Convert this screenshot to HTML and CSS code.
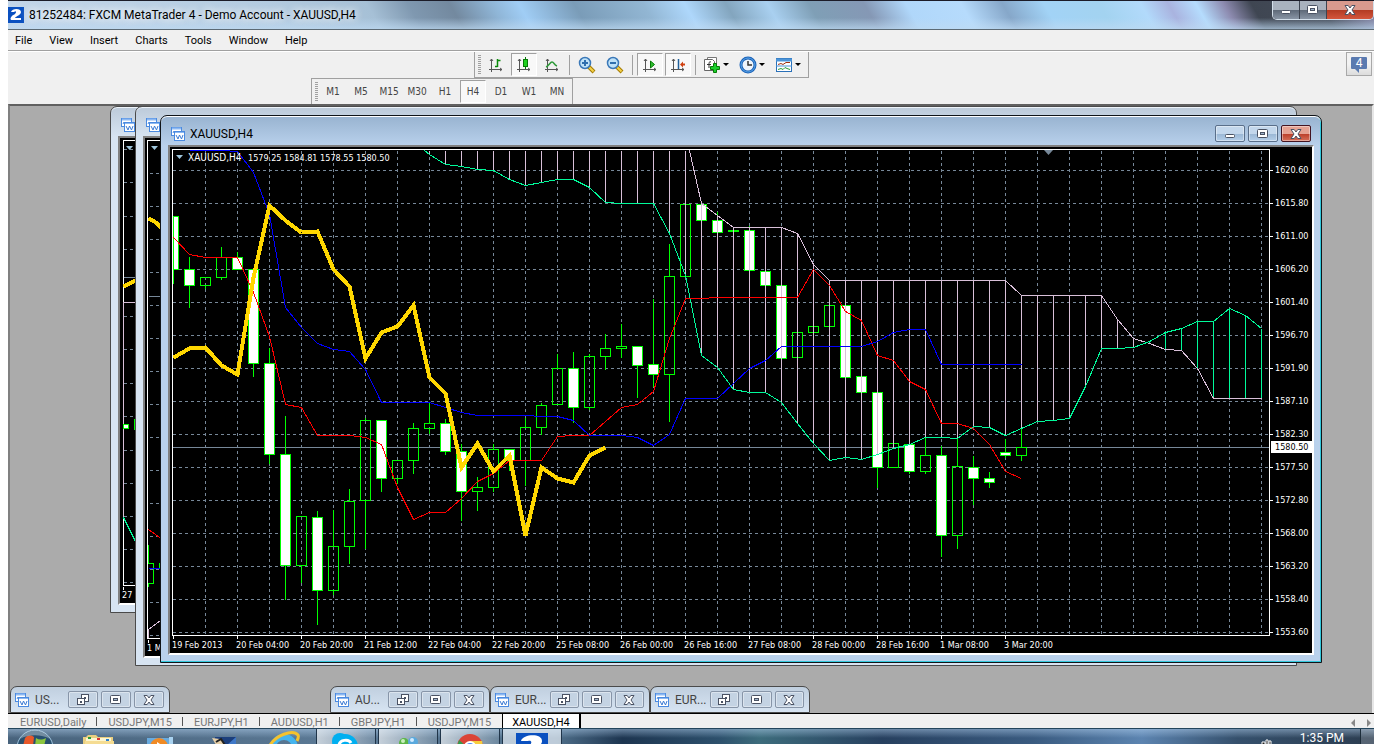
FILE: index.html
```html
<!DOCTYPE html>
<html lang="en">
<head>
  <meta charset="UTF-8">
  <title>81252484: FXCM MetaTrader 4 - Demo Account - XAUUSD,H4</title>
  <link rel="stylesheet" href="styles.css">
</head>
<body>
  <!-- shared icons -->
  <svg width="0" height="0" class="defs">
    <symbol id="i-chart" viewBox="0 0 14 14">
      <rect x="0.5" y="0.5" width="10" height="8" fill="#fff" stroke="#4a8ae0"/>
      <path d="M1 1.5h9" stroke="#8db9f2" stroke-width="2"/>
      <path d="M2 6l1-2 1 2 1-2" fill="none" stroke="#4a8ae0"/>
      <rect x="3.500" y="4.500" width="10" height="9" fill="#fff" stroke="#4a8ae0"/>
      <path d="M4 5.500h9" stroke="#8db9f2"/>
      <path d="M5 8l2 4 1.500-4 2 4 1.500-4" fill="none" stroke="#3c7bd4"/>
    </symbol>
    <symbol id="i-min" viewBox="0 0 14 12">
      <rect x="2.500" y="6.500" width="9" height="3" rx="1" fill="#fff" stroke="#4a5263"/>
    </symbol>
    <symbol id="i-max" viewBox="0 0 14 12">
      <rect x="1.500" y="1.500" width="10" height="8" rx="1" fill="#fff" stroke="#4a5263"/>
      <rect x="4.500" y="4.500" width="4" height="2" fill="#9fb4cc" stroke="#4a5263"/>
    </symbol>
    <symbol id="i-restore" viewBox="0 0 14 12">
      <rect x="5.500" y="0.500" width="7" height="7" fill="#fff" stroke="#4a5263"/>
      <rect x="8.500" y="3.500" width="1" height="1" fill="#fff" stroke="#4a5263"/>
      <rect x="1.500" y="4.500" width="7" height="6" fill="#fff" stroke="#4a5263"/>
      <rect x="4.500" y="7.500" width="1" height="1" fill="#fff" stroke="#4a5263"/>
    </symbol>
    <symbol id="i-close" viewBox="0 0 14 12">
      <path d="M2 1.500h3.200L7 4l1.800-2.500H12L9 6l3 4.500H8.800L7 8l-1.800 2.500H2L5 6z" fill="#fff" stroke="#4a5263"/>
    </symbol>
    <symbol id="i-axes" viewBox="0 0 16 16">
      <path d="M3.500 2v13M1 12.500h13M2 4l1.500-2L5 4M12 11l2 1.500-2 1.500" fill="none" stroke="#555"/>
    </symbol>
  </svg>

  <div class="app">
    <header class="titlebar">
      <svg class="logo" width="16" height="16" viewBox="0 0 16 16">
        <rect width="16" height="16" fill="#0a50c0"/>
        <path d="M3 5C4 1 13 1 13 5c0 3-5 4-6 6h6v2H4c-2 0-2-2 0-4 1-1 4-2 4-4 0-1-1-1-2 0z" fill="#fff"/>
      </svg>
      <h1>81252484: FXCM MetaTrader 4 - Demo Account - XAUUSD,H4</h1>
      <div class="caption">
        <button aria-label="Minimize"><svg width="14" height="12"><use href="#i-min"/></svg></button>
        <button aria-label="Restore"><svg width="14" height="12"><use href="#i-max"/></svg></button>
        <button class="close" aria-label="Close"><svg width="14" height="12"><use href="#i-close"/></svg></button>
      </div>
    </header>

    <nav class="menu">
      <button>File</button>
      <button>View</button>
      <button>Insert</button>
      <button>Charts</button>
      <button>Tools</button>
      <button>Window</button>
      <button>Help</button>
    </nav>

    <div class="toolbars">
      <div class="toolbar charts-bar">
        <span class="grip"></span>
        <button class="tool" aria-label="Bar chart">
          <svg width="16" height="16"><use href="#i-axes"/><path d="M9.500 2v8M9.500 3.500h3M7 9.500h2.500" fill="none" stroke="#0a8a0a" stroke-width="1.500"/></svg>
        </button>
        <button class="tool on" aria-label="Candlesticks">
          <svg width="16" height="16"><use href="#i-axes"/><path d="M9.500 0v12" stroke="#067a06"/><rect x="7.500" y="2.500" width="4" height="7" fill="#1fd01f" stroke="#067a06"/></svg>
        </button>
        <button class="tool" aria-label="Line chart">
          <svg width="16" height="16"><use href="#i-axes"/><path d="M2 10c3-1 4-5 6-5s2 3 5 4" fill="none" stroke="#2f9a3a" stroke-width="1.500"/></svg>
        </button>
        <span class="sep"></span>
        <button class="tool" aria-label="Zoom in">
          <svg width="18" height="18"><path d="M10.500 10.500l5.500 5.500" stroke="#a67c00" stroke-width="4"/><path d="M10.500 10.500l5 5" stroke="#f5d24a" stroke-width="2"/><circle cx="7" cy="7" r="5.500" fill="#bfe2f8" stroke="#3a78b8" stroke-width="1.500"/><path d="M4 7h6M7 4v6" stroke="#2f6fae" stroke-width="2"/></svg>
        </button>
        <button class="tool" aria-label="Zoom out">
          <svg width="18" height="18"><path d="M10.500 10.500l5.500 5.500" stroke="#a67c00" stroke-width="4"/><path d="M10.500 10.500l5 5" stroke="#f5d24a" stroke-width="2"/><circle cx="7" cy="7" r="5.500" fill="#bfe2f8" stroke="#3a78b8" stroke-width="1.500"/><path d="M4 7h6" stroke="#2f6fae" stroke-width="2"/></svg>
        </button>
        <span class="sep"></span>
        <button class="tool on" aria-label="Auto scroll">
          <svg width="16" height="16"><use href="#i-axes"/><path d="M8.500 4v7l4-3.500z" fill="#2fc02f" stroke="#067a06"/></svg>
        </button>
        <button class="tool on" aria-label="Chart shift">
          <svg width="16" height="16"><use href="#i-axes"/><path d="M8.500 2v10" stroke="#1f5f9a" stroke-width="1.500"/><path d="M10 7.500l3-3v2h2v2h-2v2z" fill="#d04010"/></svg>
        </button>
        <span class="sep"></span>
        <button class="tool drop" aria-label="Indicators">
          <svg width="18" height="18"><path d="M4.500 1.500h9v10h-9z" fill="#fff" stroke="#777"/><path d="M1.500 3.500h8l2 2v9h-10z" fill="#fff" stroke="#666"/><path d="M8 6c-2-1-2 1-2 2v4M4 8.500h4" fill="none" stroke="#333"/><path d="M10.500 7.500h3v3h3v3h-3v3h-3v-3h-3v-3h3z" fill="#19cf2b" stroke="#067a06"/></svg>
        </button>
        <button class="tool drop" aria-label="Periods">
          <svg width="18" height="18"><circle cx="9" cy="9" r="7" fill="#eef4fb" stroke="#1b62b8" stroke-width="3"/><circle cx="9" cy="9" r="7" fill="none" stroke="#5aa5e8"/><path d="M9 5v4h4" fill="none" stroke="#333" stroke-width="1.500"/></svg>
        </button>
        <button class="tool drop" aria-label="Templates">
          <svg width="18" height="16"><rect x="1.500" y="1.500" width="15" height="13" fill="#fff" stroke="#2a70b8"/><path d="M1 3h16" stroke="#4b94d8" stroke-width="3"/><path d="M1 9h16" stroke="#4b94d8"/><path d="M3 7.500l3-1 2 1 3-2 4 0" fill="none" stroke="#a03010"/><path d="M3 12.500l3-1 2 1 2-2 2 1 3 1" fill="none" stroke="#2b9a3a"/></svg>
        </button>
      </div>
      <button class="messages" aria-label="4 messages">
        <span>4</span>
      </button>
      <div class="toolbar periods-bar">
        <span class="grip"></span>
        <button class="tool">M1</button>
        <button class="tool">M5</button>
        <button class="tool">M15</button>
        <button class="tool">M30</button>
        <button class="tool">H1</button>
        <button class="tool on">H4</button>
        <button class="tool">D1</button>
        <button class="tool">W1</button>
        <button class="tool">MN</button>
      </div>
    </div>

    <main class="workspace">
      <section class="window back-first">
        <div class="window-title"><svg width="14" height="14"><use href="#i-chart"/></svg></div>
        <div class="window-body">
          <svg width="1142" height="465" viewBox="120 138 1142 465">
            <g transform="translate(.5 .5)" shape-rendering="crispEdges" fill="none">
              <path class="grid" d="M123 149h12M123 182h12M123 216h12M123 249h12M123 316h12M123 349h12M123 383h12M123 416h12M123 450h12M123 483h12M123 516h12M123 549h12M123 582h12"/>
              <path class="price-line" d="M123 277h12"/>
              <path class="frame" d="M135 140h-12v445h12M123 586v3"/>
              <path class="span-b" d="M135 302h-12v214"/>
              <path class="span-a" d="M123 517l12 24"/>
              <path class="candle bear" d="M123 424h5v4h-5z"/>
              <path class="candle" d="M134 418v11"/>
              <path class="chikou" d="M123 286l14-7"/>
            </g>
            <path d="M126 146h7l-3.500 4z" fill="#9fc6dc"/>
            <text x="122" y="598">27</text>
          </svg>
        </div>
      </section>

      <section class="window back-second">
        <div class="window-title"><svg width="14" height="14"><use href="#i-chart"/></svg></div>
        <div class="window-body">
          <svg width="1142" height="518" viewBox="145 138 1142 518">
            <g transform="translate(.5 .5)" shape-rendering="crispEdges" fill="none">
              <path class="grid" d="M149 173h12M149 206h12M149 239h12M149 272h12M149 305h12M149 338h12M149 371h12M149 404h12M149 437h12M149 470h12M149 503h12M149 536h12M149 569h12M149 602h12M149 635h12"/>
              <path class="price-line" d="M148 296h14"/>
              <path class="frame" d="M162 140h-15v498h15M148 639v3"/>
              <path class="tenkan" d="M148 529l14 10"/>
              <path class="candle" d="M148 544v19h5v20h-5v3M159 562v5"/>
              <path class="kijun" d="M148 568h14"/>
              <path class="span-b" d="M148 637v-8l12-9"/>
              <path class="chikou" d="M148 218l6 3 8 7"/>
            </g>
            <path d="M151 146h7l-3.500 4z" fill="#9fc6dc"/>
            <text x="147" y="651">1 M</text>
          </svg>
        </div>
      </section>

      <section class="window active">
        <div class="window-title">
          <svg width="14" height="14"><use href="#i-chart"/></svg>
          <h2>XAUUSD,H4</h2>
          <div class="window-buttons">
            <button aria-label="Minimize"><svg width="14" height="12"><use href="#i-min"/></svg></button>
            <button aria-label="Maximize"><svg width="14" height="12"><use href="#i-max"/></svg></button>
            <button class="close" aria-label="Close"><svg width="14" height="12"><use href="#i-close"/></svg></button>
          </div>
        </div>
        <div class="window-body">
          <svg id="chart" width="1142" height="506" viewBox="170 147 1142 506"></svg>
        </div>
      </section>

      <div class="minimized">
        <div class="mini">
          <svg width="14" height="14"><use href="#i-chart"/></svg><span>US...</span>
          <button aria-label="Restore"><svg width="14" height="12"><use href="#i-restore"/></svg></button>
          <button aria-label="Maximize"><svg width="14" height="12"><use href="#i-max"/></svg></button>
          <button aria-label="Close"><svg width="14" height="12"><use href="#i-close"/></svg></button>
        </div>
        <div class="mini-space"></div>
        <div class="mini">
          <svg width="14" height="14"><use href="#i-chart"/></svg><span>AU...</span>
          <button aria-label="Restore"><svg width="14" height="12"><use href="#i-restore"/></svg></button>
          <button aria-label="Maximize"><svg width="14" height="12"><use href="#i-max"/></svg></button>
          <button aria-label="Close"><svg width="14" height="12"><use href="#i-close"/></svg></button>
        </div>
        <div class="mini">
          <svg width="14" height="14"><use href="#i-chart"/></svg><span>EUR...</span>
          <button aria-label="Restore"><svg width="14" height="12"><use href="#i-restore"/></svg></button>
          <button aria-label="Maximize"><svg width="14" height="12"><use href="#i-max"/></svg></button>
          <button aria-label="Close"><svg width="14" height="12"><use href="#i-close"/></svg></button>
        </div>
        <div class="mini">
          <svg width="14" height="14"><use href="#i-chart"/></svg><span>EUR...</span>
          <button aria-label="Restore"><svg width="14" height="12"><use href="#i-restore"/></svg></button>
          <button aria-label="Maximize"><svg width="14" height="12"><use href="#i-max"/></svg></button>
          <button aria-label="Close"><svg width="14" height="12"><use href="#i-close"/></svg></button>
        </div>
      </div>
    </main>

    <nav class="tabs">
      <button>EURUSD,Daily</button>
      <button>USDJPY,M15</button>
      <button>EURJPY,H1</button>
      <button>AUDUSD,H1</button>
      <button>GBPJPY,H1</button>
      <button>USDJPY,M15</button>
      <button class="current">XAUUSD,H4</button>
      <svg class="tab-arrows" width="26" height="12"><path d="M7 2v8L3 6zM19 2v8l4-4z" fill="#888"/></svg>
    </nav>

    <footer class="taskbar">
      <button class="pin" aria-label="Start">
        <svg width="40" height="16" viewBox="0 0 40 16"><circle cx="19" cy="19" r="18" fill="#28506f" stroke="#9fc3dd"/><path d="M9 9c3-3 6-3 9-1l-1 9H7z" fill="#e8582a"/><path d="M20 9c3 2 6 2 10 0l-2 8h-9z" fill="#8cc63e"/><path d="M4 10a17 17 0 0 1 30 0C26 5 12 5 4 10z" fill="#fff" opacity=".35"/></svg>
      </button>
      <button class="pin" aria-label="Windows Explorer">
        <svg width="40" height="16" viewBox="0 0 40 16"><path d="M4 16V8h3l2-2h8l2 2h15v8z" fill="#e9cf80"/><path d="M7 9h25v3H7z" fill="#fdf6d2"/><path d="M6 12h29v4H6z" fill="#f5dc92"/><path d="M9 8h3v2H9z" fill="#2a9d3a"/><path d="M18 9h3v2h-3z" fill="#d33"/><path d="M27 10h3v2h-3z" fill="#2b7fd0"/></svg>
      </button>
      <button class="pin" aria-label="Media Player">
        <svg width="40" height="16" viewBox="0 0 40 16"><path d="M6 9h25v7H6z" fill="#68abe0"/><path d="M28 8h4v8h-4z" fill="#a8d2f0"/><circle cx="18" cy="18" r="9" fill="#f08a24"/><path d="M16 13l6 4h-6z" fill="#fff"/></svg>
      </button>
      <button class="pin" aria-label="Trader">
        <svg width="40" height="16" viewBox="0 0 40 16"><path d="M12 8h21v8H12z" fill="#1c3f7c"/><path d="M24 16l9-8v8z" fill="#3f78c8"/><path d="M9 9l8 1 6 6H13z" fill="#e6cfa8"/><path d="M13 13l5-3 4 6" fill="none" stroke="#222" stroke-width="2"/></svg>
      </button>
      <button class="pin" aria-label="Internet Explorer">
        <svg width="40" height="16" viewBox="0 0 40 16"><circle cx="19" cy="19" r="11" fill="none" stroke="#45b4ee" stroke-width="6"/><path d="M4 18C10 6 28 0 33 6c1 2 0 4-1 6" fill="none" stroke="#f5c22e" stroke-width="3"/></svg>
      </button>
      <button class="task" aria-label="Skype">
        <svg width="34" height="16" viewBox="0 0 34 16"><circle cx="11" cy="12" r="8" fill="#00aff0"/><circle cx="16" cy="18" r="13" fill="#00aff0"/><path d="M10 17c0-7 10-7 12-3" fill="none" stroke="#fff" stroke-width="3"/></svg>
      </button>
      <button class="task" aria-label="Messenger">
        <svg width="34" height="16" viewBox="0 0 34 16"><circle cx="13" cy="14" r="5" fill="#5cb548"/><circle cx="22" cy="13" r="5" fill="#5aa9dd"/><circle cx="21" cy="11" r="2" fill="#cfeaff"/><circle cx="12" cy="12" r="2" fill="#c9efbd"/></svg>
      </button>
      <button class="task" aria-label="Chrome">
        <svg width="34" height="16" viewBox="0 0 34 16"><circle cx="17" cy="18" r="13" fill="#db4437"/><path d="M4 18l2-7 8 7z" fill="#2e9e4f"/><path d="M17 12h12l1 6H18z" fill="#f7cd3b"/><circle cx="17" cy="18" r="6" fill="#fff"/><circle cx="17" cy="18" r="4" fill="#4a8af4"/></svg>
      </button>
      <button class="task lit" aria-label="MetaTrader">
        <svg width="34" height="16" viewBox="0 0 34 16"><path d="M1 4h32v12H1z" fill="#0a50c0"/><path d="M6 12c2-7 21-8 21 0 0 2-1 3-2 4H15c2-2 2-5-2-4z" fill="#fff"/></svg>
      </button>
      <div class="tray">
        <svg width="14" height="16" viewBox="0 0 14 16"><path d="M2 13h3v3H2zM6 11h2v5H6zM9 12h2v4H9z" fill="#222" stroke="#fff"/></svg>
        <time>1:35 PM</time>
        <span class="show-desktop"></span>
      </div>
    </footer>
  </div>

  <script src="chart.js"></script>
</body>
</html>
```

FILE: styles.css
```css
* {
  box-sizing: border-box;
}
body {
  margin: 0;
  background: #fff;
  font-family: Roboto, "Liberation Sans", sans-serif;
  font-size: 11px;
  color: #000;
}
button {
  margin: 0;
  padding: 0;
  border: 0;
  background: none;
  font: inherit;
  color: inherit;
}
h1, h2 {
  margin: 0;
  font-size: 12px;
  font-weight: normal;
}
svg {
  display: block;
  flex: none;
}
.defs {
  position: absolute;
}
.app {
  display: flex;
  flex-direction: column;
  height: 100vh;
  margin: 0 8px;
  overflow: hidden;
  background: #f0f0f0;
}

/* title bar */
.titlebar {
  display: flex;
  flex: none;
  height: 30px;
  border-top: 1px solid #1c1c28;
  border-bottom: 1px solid #5c6a74;
  background:
    linear-gradient(transparent 60%, rgba(190, 218, 242, .7)),
    linear-gradient(60deg, #c3d6ea 0%, #bdd2e6 8%, #b3cbe0 20%, #a6c0d6 27%, #7f98b0 30%, #73899f 33%, #8fb5d6 36%, #a0cdf5 38%, #7a9cb8 42%, #92b6d3 47%, #aed7fb 50%, #83a5be 53%, #a9d0f0 56%, #7f9fb6 59%, #8598b5 63%, #b0d7fa 66%, #b6dbfc 70%, #86a7c9 73%, #a2d3f6 76%, #a3d3f0 80%, #b2dafb 83%, #a9b3df 85%, #b5dcfd 87%, #8d8bb0 89%, #3f4652 91%, #444b58 96%, #8d8bb0 100%);
}
.logo {
  margin: 6px 5px 0 0;
}
.titlebar h1 {
  line-height: 28px;
  text-shadow: 0 0 8px #fff, 0 0 8px #fff;
}
.caption {
  display: flex;
  width: 102px;
  height: 19px;
  margin-left: auto;
  border: 1px solid #d3dfea;
  border-top: 0;
  border-radius: 0 0 5px 5px;
  overflow: hidden;
}
.caption button {
  display: grid;
  place-items: center;
  width: 27px;
  border-right: 1px solid #3d4450;
  background: linear-gradient(#a9b2be 50%, #5d6877 50%, #8995a5);
}
.caption .close {
  flex: 1;
  border-right: 0;
  background: linear-gradient(#d99a8e 48%, #b23a22 50%, #d4563c);
}

/* menu */
.menu {
  display: flex;
  flex: none;
  gap: 17px;
  height: 22px;
  padding-left: 7px;
  border-bottom: 1px solid #fff;
  box-shadow: inset 0 -1px #a0a0a0;
  line-height: 20px;
}

/* toolbars */
.toolbars {
  position: relative;
  flex: none;
  height: 52px;
}
.toolbar {
  display: flex;
  align-items: center;
  width: max-content;
  height: 26px;
  border: 1px solid #a0a0a0;
  border-top: 0;
}
.charts-bar {
  margin-left: 466px;
  padding-right: 1px;
}
.periods-bar {
  margin-left: 303px;
  padding-right: 1px;
  border-top: 1px solid #a0a0a0;
  border-bottom: 0;
  font-family: "DejaVu Sans Condensed", "DejaVu Sans", sans-serif;
  font-size: 10px;
  color: #444;
}
.grip {
  width: 3px;
  height: 19px;
  margin: 0 1px 0 3px;
  background: repeating-linear-gradient(#a0a0a0 0 1px, #f0f0f0 1px 2px);
}
.tool {
  display: grid;
  place-items: center;
  width: 26px;
  height: 23px;
  margin: 0 1px;
  border: 1px solid transparent;
}
.tool.on {
  border-color: #a0a0a0 #fff #fff #a0a0a0;
  background: #f8f8f8;
}
.sep {
  width: 1px;
  height: 20px;
  margin: 0 3px;
  background: #a0a0a0;
}
.tool.drop {
  display: flex;
  justify-content: space-between;
  width: 34px;
  padding: 0 4px 0 2px;
}
.tool.drop::after {
  content: "";
  border: 3px solid transparent;
  border-top-color: #000;
  border-bottom: 0;
}
.messages {
  position: absolute;
  top: 0;
  right: 2px;
  display: grid;
  place-items: center;
  width: 26px;
  height: 24px;
  border: 1px solid #a8a8a8;
  background: linear-gradient(#f2f2f2 50%, #dcdcdc);
}
.messages span {
  position: relative;
  width: 16px;
  height: 12px;
  margin-bottom: 3px;
  border-radius: 1px;
  background: #5a7ab0;
  color: #fff;
  font-size: 12px;
  line-height: 12px;
}
.messages span::after {
  content: "";
  position: absolute;
  top: 12px;
  left: 4px;
  border: 2px solid transparent;
  border-top-color: #5a7ab0;
  border-right-color: #5a7ab0;
}

/* chart windows */
.workspace {
  position: relative;
  display: flex;
  align-items: flex-end;
  flex: 1;
  min-height: 0;
  border: 2px solid #696969;
  border-top-color: #606060;
  border-left-color: #808080;
  border-right-color: #e6e6e6;
  border-bottom: 0;
  background: #ababab;
  overflow: hidden;
}
.window {
  position: absolute;
  display: flex;
  flex-direction: column;
  width: 1162px;
  padding: 0 7px 7px;
  border: 1px solid #4a4a4a;
  border-radius: 7px 7px 0 0;
  background: linear-gradient(#bccad9, #d7e4f2 30px);
  box-shadow: inset 0 1px #eef4fa;
}
.back-first {
  top: 0;
  left: 100px;
}
.back-second {
  top: 0;
  left: 125px;
}
.window.active {
  top: 9px;
  left: 150px;
  border-color: #101418;
  background: linear-gradient(#98b3d0, #b9d1ec 30px);
  box-shadow: inset 0 1px #fff, inset -1px -1px #32c8dc;
}
.window-title {
  display: flex;
  align-items: center;
  gap: 5px;
  height: 29px;
  padding: 6px 3px 0;
}
.window-body {
  border: 2px solid #fff;
  border-top-color: #808080;
  border-left-color: #808080;
  background: #000;
}
.window-buttons {
  display: flex;
  gap: 3px;
  margin-left: auto;
}
.window-buttons button,
.mini button {
  display: grid;
  place-items: center;
  width: 30px;
  height: 17px;
  border: 1px solid #5a6f8a;
  border-radius: 2px;
  background: linear-gradient(#c3d7ec 50%, #98b5d3 50%, #b5cfea);
  box-shadow: inset 0 0 0 1px rgba(255, 255, 255, .4);
}
.window-buttons .close {
  border-color: #431421;
  background: linear-gradient(#e5a293 50%, #b93b26 50%, #d6705a);
}
.minimized {
  display: flex;
}
.mini {
  display: flex;
  align-items: center;
  gap: 3px;
  width: 160px;
  height: 27px;
  padding: 0 5px 0 4px;
  border: 1px solid #4a4a4a;
  border-radius: 7px 7px 0 0;
  background: linear-gradient(#c0cfdf, #d7e4f2);
  font-size: 12px;
  color: #444;
}
.mini span {
  flex: 1;
  padding-left: 3px;
}
.mini button {
  border-color: #8795a8;
  background: #c4d3e3;
}
.mini-space {
  width: 160px;
}

/* chart drawing */
.window-body text {
  fill: #fff;
  font-family: "DejaVu Sans Condensed", "DejaVu Sans", sans-serif;
  font-size: 9px;
}
.window-body .symbol {
  font-size: 10px;
}
.window-body .dark {
  fill: #000;
}
.grid {
  stroke: #778899;
  stroke-dasharray: 3 3;
}
.price-line {
  stroke: #778899;
}
.frame {
  stroke: #fff;
}
.candle {
  stroke: #0f0;
}
.candle.bear {
  fill: #fff;
}
.tenkan {
  stroke: #f00;
}
.kijun {
  stroke: #00f;
}
.span-a {
  stroke: #00fa9a;
}
.span-b {
  stroke: #d8bfd8;
}
.chikou {
  stroke: #ffd700;
  stroke-width: 4;
}

/* symbol tabs */
.tabs {
  display: flex;
  flex: none;
  height: 16px;
  padding-left: 1px;
  border-top: 1px solid #000;
  box-shadow: 0 -2px #fff;
  line-height: 12px;
  color: #777;
  overflow: hidden;
}
.tabs button {
  position: relative;
  height: 16px;
  padding: 2px 11px 0;
}
.tabs button:not(.current)::after {
  content: "";
  position: absolute;
  top: 3px;
  right: 0;
  height: 9px;
  border-right: 1px solid #555;
}
.tabs button:nth-child(6)::after {
  display: none;
}
.tabs .current {
  padding: 2px 9px 0;
  border: solid #000;
  border-width: 0 2px 0 1px;
  background: #fff;
  color: #000;
}
.tab-arrows {
  margin: 3px 0 0 auto;
}

/* taskbar */
.taskbar {
  display: flex;
  flex: none;
  height: 16px;
  margin-top: -1px;
  position: relative;
  border-top: 1px solid #23455c;
  background:
    linear-gradient(rgba(190, 220, 250, .45), transparent 60%),
    linear-gradient(90deg, #48637c, #5c7a96 25%, #51718c 40%, #1d3550 45%, #2d506c 52%, #3d6c7c 55%, #27405f 64%, #3a5b80 75%, #5c84b0 83%, #35506c 90%, #2c3d50);
  overflow: hidden;
}
.pin {
  width: 62px;
  padding-left: 8px;
}
.pin + .pin {
  padding-left: 9px;
}
.task {
  display: flex;
  justify-content: center;
  width: 60px;
  margin-right: 2px;
  border: solid #20354a;
  border-width: 0 1px;
  background: linear-gradient(90deg, rgba(255, 255, 255, .65), rgba(255, 255, 255, .15));
}
.pin + .task {
  margin-left: -2px;
}
.lit {
  background: rgba(235, 242, 250, .7);
}
.tray {
  display: flex;
  gap: 16px;
  margin-left: auto;
  color: #fff;
}
.tray svg {
  margin-right: 10px;
}
.tray time {
  padding-top: 4px;
  font-size: 12px;
  line-height: 11px;
}
.show-desktop {
  width: 14px;
  border-left: 1px solid #1c2c3a;
  background: rgba(255, 255, 255, .2);
}
```

FILE: chart.js
```js
// XAUUSD H4 chart with Ichimoku overlay
const svg = document.getElementById("chart");
const left = 172, right = 1269, topY = 149, bottom = 635;
const step = 16;
const barX = i => 173 + i * step;

// [body top, body bottom, high, low, 1 = bear]
const candles = [
  [216, 269, 215, 283, 1], [269, 285, 256, 307, 1], [277, 285, 276, 288, 0], [257, 277, 246, 279, 0],
  [257, 269, 251, 269, 1], [269, 363, 267, 376, 1], [363, 454, 347, 463, 1], [454, 565, 415, 599, 1],
  [516, 565, 515, 582, 0], [517, 590, 510, 624, 1], [546, 590, 509, 594, 0], [501, 546, 488, 563, 0],
  [420, 500, 417, 548, 0], [420, 478, 420, 491, 1], [460, 478, 459, 483, 0], [428, 460, 422, 473, 0],
  [423, 428, 402, 433, 0], [423, 451, 418, 454, 1], [451, 491, 443, 520, 1], [487, 491, 476, 510, 0],
  [449, 487, 443, 491, 0], [449, 460, 449, 470, 1], [427, 460, 417, 485, 0], [405, 427, 402, 434, 0],
  [368, 404, 353, 404, 0], [368, 407, 351, 422, 1], [356, 407, 353, 409, 0], [348, 356, 333, 369, 0],
  [346, 348, 323, 357, 0], [346, 365, 345, 397, 1], [364, 374, 298, 386, 1], [276, 374, 243, 421, 0],
  [204, 276, 204, 276, 0], [204, 220, 203, 220, 1], [220, 232, 211, 232, 1], [230, 231, 226, 231, 0],
  [230, 270, 225, 270, 1], [271, 285, 271, 285, 1], [285, 358, 285, 358, 1], [332, 357, 332, 357, 0],
  [326, 332, 326, 332, 0], [305, 326, 305, 326, 0], [305, 377, 305, 377, 1], [376, 392, 376, 392, 1],
  [392, 467, 392, 487, 1], [443, 467, 443, 467, 0], [444, 471, 444, 473, 1], [455, 471, 437, 473, 0],
  [455, 535, 445, 556, 1], [466, 535, 438, 548, 0], [467, 478, 455, 504, 1], [478, 482, 471, 487, 1],
  [452, 455, 438, 457, 1], [447, 455, 420, 460, 0]
];

const tenkan = [237, 254, 257, 257, 257, 292, 336, 404, 407, 435, 435, 435, 437, 444, 487, 519, 512, 512, 498, 481,
  473, 460, 460, 460, 436, 435, 435, 421, 407, 404, 391, 338, 298, 298, 297, 297, 297, 297, 297, 297,
  269, 285, 311, 320, 355, 360, 381, 389, 423, 423, 428, 444, 471, 478];
const kijun = [150, 150, 150, 150, 151, 172, 214, 307, 327, 343, 349, 351, 369, 402, 402, 402, 402, 407, 412, 415,
  415, 415, 415, 416, 416, 420, 435, 435, 435, 437, 445, 434, 398, 398, 398, 383, 368, 360, 346, 346,
  346, 346, 346, 346, 341, 332, 329, 329, 364, 364, 364, 364, 364, 364];
const chikou = [357, 348, 347, 365, 374, 277, 205, 220, 232, 231, 269, 286, 358, 332, 326, 305, 377, 393, 467, 443,
  471, 455, 535, 467, 478, 482, 455, 447];
// cloud starts at bar 16
const spanA = [154, 164, 166, 169, 170, 179, 185, 182, 179, 179, 187, 202, 203, 203, 203, 233, 275, 355, 367, 389,
  392, 392, 402, 423, 443, 460, 457, 459, 454, 448, 444, 437, 437, 438, 426, 427, 435, 428, 421, 420, 418, 386,
  348, 348, 347, 341, 332, 328, 321, 321, 308, 315, 328];
const spanB = [203, 215, 227, 227, 227, 227, 233, 264, 280, 280, 280, 280, 280, 280, 280, 280, 280, 280, 280, 280,
  295, 295, 295, 295, 295, 295, 319, 338, 343, 349, 350, 368, 398, 398, 398, 398];

const prices = ["1620.60", "1615.80", "1611.00", "1606.20", "1601.40", "1596.70", "1591.90", "1587.10",
  "1582.30", "1577.50", "1572.80", "1568.00", "1563.20", "1558.40", "1553.60"];
const dates = ["19 Feb 2013", "20 Feb 04:00", "20 Feb 20:00", "21 Feb 12:00", "22 Feb 04:00", "22 Feb 20:00",
  "25 Feb 08:00", "26 Feb 00:00", "26 Feb 16:00", "27 Feb 08:00", "28 Feb 00:00", "28 Feb 16:00",
  "1 Mar 08:00", "3 Mar 20:00"];

const path = (cls, d) => `<path class="${cls}" d="${d}"/>`;
const line = (values, start) => "M" + values.map((y, i) => `${barX(i + start)} ${y}`).join("L");

let out = "";
let labels = "";

// grid and axes
for (let x = 205; x < right; x += 32) out += path("grid", `M${x} 150V${bottom}`);
prices.forEach((p, i) => {
  const y = 170 + i * 33;
  out += path("grid", `M${left} ${y}H${right}`) + path("frame", `M${right} ${y}h3`);
  labels += `<text x="1275" y="${y + 3}">${p}</text>`;
});
dates.forEach((d, i) => {
  const x = 173 + i * 64;
  out += path("frame", `M${x} ${bottom}v3`);
  labels += `<text x="${x - 1}" y="648">${d}</text>`;
});
out += path("price-line", `M${left} 447H${right}`);

// candles
candles.forEach(([t, b, hi, lo, bear], i) => {
  const x = barX(i);
  const l = Math.max(x - 5, 173);
  out += path("candle", `M${x} ${hi}V${t}M${x} ${b}V${lo}`);
  out += path(bear ? "candle bear" : "candle", `M${l} ${t}H${x + 5}V${b}H${l}z`);
});

// cloud hatching
spanA.forEach((a, i) => {
  const b = i < 17 ? 150 : spanB[i - 17];
  out += path(a > b ? "span-b" : "span-a", `M${barX(i + 16)} ${b}V${a}`);
});
out += path("span-b", "M689 150L" + line(spanB, 33).slice(1));
out += path("span-a", "M424 150L" + line(spanA, 16).slice(1));

out += path("tenkan", line(tenkan, 0));
out += path("kijun", line(kijun, 0).replace("M173", "M189"));
out += path("chikou", line(chikou, 0));
out += path("frame", `M${left} ${topY}H${right}V${bottom}H${left}z`);

svg.innerHTML = `
  <g transform="translate(.5 .5)" fill="none" shape-rendering="crispEdges">${out}</g>
  <path d="M1044 150h9l-4.500 5z" fill="#778899"/>
  <path d="M176 155h7l-3.500 4z" fill="#9fc6dc"/>
  <text class="symbol" x="188" y="161">XAUUSD,H4</text>
  <text x="248" y="161">1579.25 1584.81 1578.55 1580.50</text>
  ${labels}
  <rect x="1271" y="441" width="41" height="12" fill="#fff"/>
  <text class="dark" x="1275" y="450">1580.50</text>`;
```
